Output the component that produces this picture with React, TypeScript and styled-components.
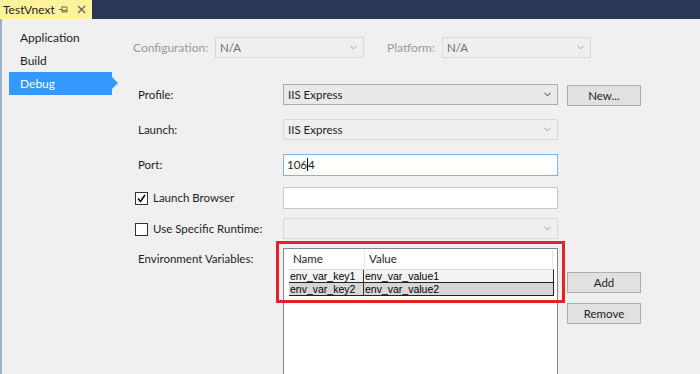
import React from 'react';
import styled, { createGlobalStyle } from 'styled-components';

const GlobalStyle = createGlobalStyle`
  html, body {
    margin: 0;
    padding: 0;
    background: #f0f0f0;
    font-family: Lato, "Noto Sans", sans-serif;
    font-size: 12px;
    color: #1e1e1e;
    overflow: hidden;
  }
`;

const Window = styled.div`
  width: 700px;
  height: 374px;
  display: flex;
  flex-direction: column;
`;

const TabBar = styled.div`
  height: 19px;
  background: #293955;
  display: flex;
  flex-shrink: 0;
`;

const Tab = styled.div`
  width: 92px;
  background: #fff29d;
  display: flex;
  align-items: center;
  padding-left: 3px;
  box-sizing: border-box;
  font-size: 12px;
  color: #1e1e1e;
  gap: 4px;
`;

const TabIcons = styled.div`
  display: flex;
  align-items: center;
  gap: 9px;
`;

const Body = styled.div`
  flex: 1;
  display: flex;
  border-left: 2px solid #9fb0cc;
  min-height: 0;
`;

const Sidebar = styled.div`
  width: 129px;
  padding-top: 7px;
  padding-left: 7px;
  box-sizing: border-box;
  display: flex;
  flex-direction: column;
  flex-shrink: 0;
`;

const NavItem = styled.div<{ $active?: boolean }>`
  position: relative;
  width: 103px;
  height: 23px;
  line-height: 23px;
  padding-left: 11px;
  box-sizing: border-box;
  font-size: 12px;
  color: ${(p) => (p.$active ? '#ffffff' : '#1e1e1e')};
  background: ${(p) => (p.$active ? '#3399ff' : 'transparent')};

  &::after {
    content: '';
    display: ${(p) => (p.$active ? 'block' : 'none')};
    position: absolute;
    right: -6px;
    top: 5px;
    border-left: 6px solid #3399ff;
    border-top: 6px solid transparent;
    border-bottom: 6px solid transparent;
  }
`;

const Content = styled.div`
  flex: 1;
  display: flex;
  flex-direction: column;
  min-width: 0;
`;

const ConfigBar = styled.div`
  display: flex;
  align-items: center;
  padding: 18px 0 0 2px;
  height: 21px;
  gap: 8px;
`;

const ConfigGroup = styled.div`
  display: flex;
  align-items: center;
  gap: 8px;
  margin-right: 15px;
`;

const DimLabel = styled.span<{ $w: number }>`
  width: ${(p) => p.$w}px;
  color: #9a9a9a;
  font-size: 12px;
`;

const Separator = styled.div`
  margin-top: 13px;
  height: 2px;
  background: #d0d0d0;
`;

const Form = styled.div`
  display: flex;
  flex-direction: column;
  padding-left: 7px;
`;

const Row = styled.div<{ $mt: number }>`
  display: flex;
  align-items: flex-start;
  margin-top: ${(p) => p.$mt}px;
`;

const Label = styled.div`
  width: 145px;
  height: 22px;
  line-height: 22px;
  font-size: 11.5px;
  display: flex;
  align-items: center;
  gap: 5px;
`;

const Check = styled.span`
  width: 11px;
  height: 11px;
  margin-left: -3px;
  border: 1px solid #333;
  background: #fff;
  display: inline-flex;
  align-items: center;
  justify-content: center;
`;

const ComboBox = styled.div<{ $w: number; $disabled?: boolean }>`
  width: ${(p) => p.$w}px;
  height: 21px;
  box-sizing: border-box;
  border: 1px solid ${(p) => (p.$disabled ? '#d9d9d9' : '#acacac')};
  background: ${(p) => (p.$disabled ? '#efefef' : '#e9e9e9')};
  display: flex;
  align-items: center;
  justify-content: space-between;
  padding: 0 6px 0 4px;
  font-size: 11.5px;
  color: ${(p) => (p.$disabled ? '#6d6d6d' : '#1e1e1e')};
`;

const TextBox = styled.div<{ $focused?: boolean }>`
  width: 275px;
  height: 22px;
  box-sizing: border-box;
  border: 1px solid ${(p) => (p.$focused ? '#7eb4ea' : '#c9c9c9')};
  background: #ffffff;
  padding: 0 3px;
  line-height: 20px;
  font-size: 11.5px;
`;

const Caret = styled.span`
  display: inline-block;
  width: 1px;
  height: 13px;
  background: #000;
  vertical-align: -2px;
`;

const Button = styled.div<{ $mt?: number }>`
  width: 74px;
  height: 21px;
  box-sizing: border-box;
  margin-left: 9px;
  margin-top: ${(p) => p.$mt ?? 0}px;
  border: 1px solid #adadad;
  background: #e1e1e1;
  display: flex;
  align-items: center;
  justify-content: center;
  font-size: 11.5px;
`;

const EnvArea = styled.div`
  position: relative;
  width: 275px;
  height: 130px;
`;

const ListView = styled.div`
  height: 100%;
  box-sizing: border-box;
  border: 1px solid #828790;
  background: #fff;
  padding: 1px 4px 0 1px;
  font-family: "Liberation Sans", Arial, sans-serif;
`;

const Header = styled.div`
  display: grid;
  grid-template-columns: 80px 1fr;
  height: 18px;
  font-family: Lato, "Noto Sans", sans-serif;
  font-size: 11.5px;
`;

const HeaderCell = styled.div<{ $pl: number }>`
  padding-left: ${(p) => p.$pl}px;
  line-height: 18px;
  border-right: 1px solid #e5e5e5;
`;

const Rows = styled.div`
  margin-top: 1px;
  margin-left: 4px;
  width: 265px;
`;

const ListRow = styled.div<{ $selected?: boolean }>`
  display: grid;
  grid-template-columns: 75px 1fr;
  height: 12px;
  line-height: 12px;
  font-size: 10.5px;
  color: #000;
  background: ${(p) => (p.$selected ? '#d6d6d6' : '#f3f3f3')};
  border-top: 1px solid ${(p) => (p.$selected ? '#222' : '#d8d8d8')};
  border-bottom: ${(p) => (p.$selected ? '1px solid #222' : 'none')};
  border-right: 1px solid #222;
`;

const Cell = styled.div<{ $divider?: boolean }>`
  border-right: ${(p) => (p.$divider ? '1px solid #333' : 'none')};
  padding-left: 1px;
  white-space: nowrap;
  overflow: hidden;
`;

const Highlight = styled.div`
  position: absolute;
  left: -7px;
  top: -7px;
  width: 289px;
  height: 62px;
  box-sizing: border-box;
  border: 3px solid #e3222c;
  pointer-events: none;
`;

const Buttons = styled.div`
  display: flex;
  flex-direction: column;
  margin-top: 24px;
  gap: 10px;
`;

function Chevron({ light }: { light?: boolean }) {
  return (
    <svg width="7" height="5" viewBox="0 0 7 5">
      <path d="M0.5 0.8 L3.5 3.8 L6.5 0.8" fill="none" stroke={light ? '#b8b8b8' : '#707070'} strokeWidth="1.1" />
    </svg>
  );
}

export default function App() {
  return (
    <>
      <GlobalStyle />
      <Window>
        <TabBar>
          <Tab>
            TestVnext
            <TabIcons>
              <svg width="9" height="9" viewBox="0 0 9 9">
                <path d="M0 4.5 H3 M3 1.5 V7.5 M3 2 H8 V7 H3 M3 5.5 H8" fill="none" stroke="#6d6a4f" strokeWidth="1" />
              </svg>
              <svg width="9" height="9" viewBox="0 0 9 9">
                <path d="M1 1 L8 8 M8 1 L1 8" stroke="#6d6a4f" strokeWidth="1.4" />
              </svg>
            </TabIcons>
          </Tab>
        </TabBar>
        <Body>
          <Sidebar>
            <NavItem>Application</NavItem>
            <NavItem>Build</NavItem>
            <NavItem $active>Debug</NavItem>
          </Sidebar>
          <Content>
            <ConfigBar>
              <ConfigGroup>
                <DimLabel $w={74}>Configuration:</DimLabel>
                <ComboBox $w={149} $disabled>
                  N/A
                  <Chevron light />
                </ComboBox>
              </ConfigGroup>
              <ConfigGroup>
                <DimLabel $w={47}>Platform:</DimLabel>
                <ComboBox $w={149} $disabled>
                  N/A
                  <Chevron light />
                </ComboBox>
              </ConfigGroup>
            </ConfigBar>
            <Separator />
            <Form>
              <Row $mt={13}>
                <Label>Profile:</Label>
                <ComboBox $w={275}>
                  IIS Express
                  <Chevron />
                </ComboBox>
                <Button $mt={1}>New...</Button>
              </Row>
              <Row $mt={13}>
                <Label>Launch:</Label>
                <ComboBox $w={275} $disabled>
                  <span style={{ color: '#1e1e1e' }}>IIS Express</span>
                  <Chevron light />
                </ComboBox>
              </Row>
              <Row $mt={13}>
                <Label>Port:</Label>
                <TextBox $focused>
                  106<Caret />4
                </TextBox>
              </Row>
              <Row $mt={11}>
                <Label>
                  <Check>
                    <svg width="9" height="9" viewBox="0 0 9 9">
                      <path d="M1 4.5 L3.5 7.5 L8 1" fill="none" stroke="#111" strokeWidth="1.6" />
                    </svg>
                  </Check>
                  Launch Browser
                </Label>
                <TextBox />
              </Row>
              <Row $mt={9}>
                <Label>
                  <Check />
                  Use Specific Runtime:
                </Label>
                <ComboBox $w={275} $disabled>
                  <span />
                  <Chevron light />
                </ComboBox>
              </Row>
              <Row $mt={8}>
                <Label>Environment Variables:</Label>
                <EnvArea>
                  <ListView>
                    <Header>
                      <HeaderCell $pl={8}>Name</HeaderCell>
                      <HeaderCell $pl={4}>Value</HeaderCell>
                    </Header>
                    <Rows>
                      <ListRow>
                        <Cell $divider>env_var_key1</Cell>
                        <Cell>env_var_value1</Cell>
                      </ListRow>
                      <ListRow $selected>
                        <Cell $divider>env_var_key2</Cell>
                        <Cell>env_var_value2</Cell>
                      </ListRow>
                    </Rows>
                  </ListView>
                  <Highlight />
                </EnvArea>
                <Buttons>
                  <Button>Add</Button>
                  <Button>Remove</Button>
                </Buttons>
              </Row>
            </Form>
          </Content>
        </Body>
      </Window>
    </>
  );
}
